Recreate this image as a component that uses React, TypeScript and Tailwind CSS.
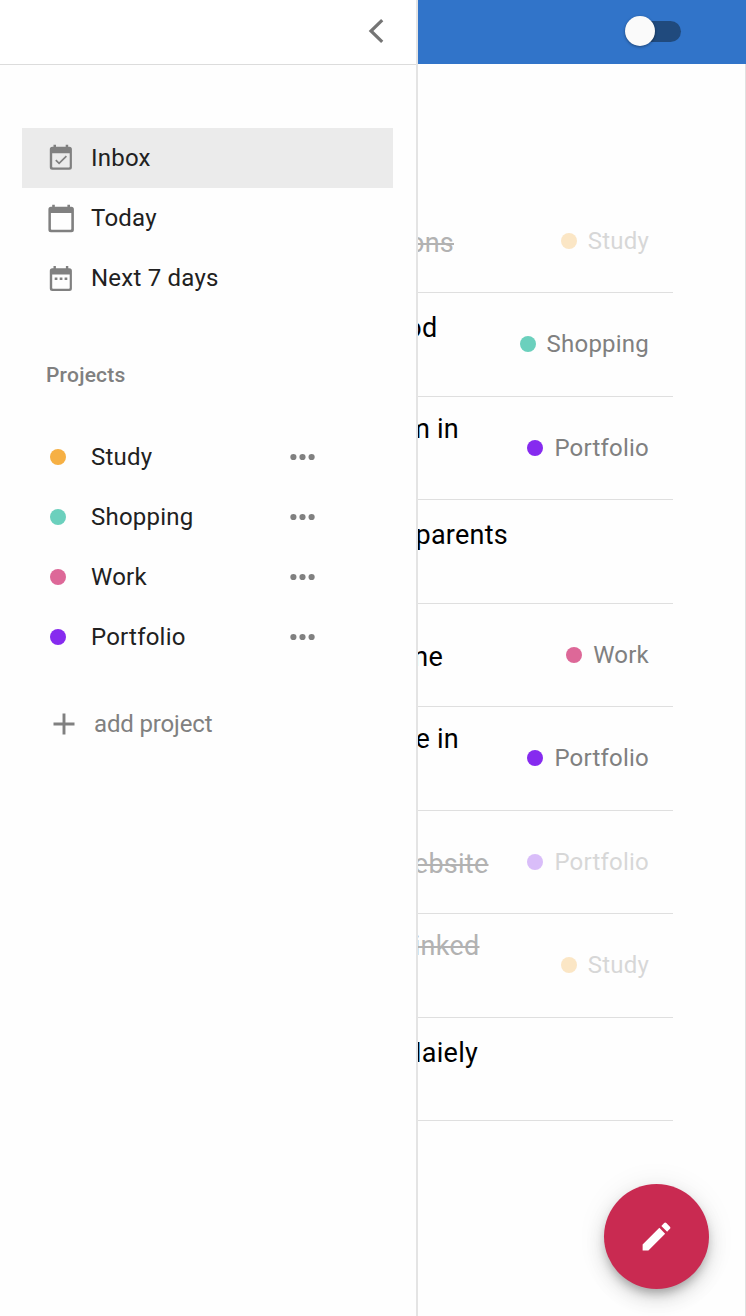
import React from "react";

type Task = {
  title: string;
  titleClass: string;
  project?: string;
  dot?: string;
  done?: boolean;
};

const tasks: Task[] = [
  { title: "ons", titleClass: "w-[36px] pt-[37px]", project: "Study", dot: "bg-[#f6b044]", done: true },
  { title: "od", titleClass: "w-[19.5px] pt-[18.5px]", project: "Shopping", dot: "bg-[#6bd0bd]" },
  { title: "m in", titleClass: "w-[41px] pt-[16px]", project: "Portfolio", dot: "bg-[#862bef]" },
  { title: "parents", titleClass: "w-[90px] pt-[18.5px]" },
  { title: "ne", titleClass: "w-[25px] pt-[37px]", project: "Work", dot: "bg-[#dd6898]" },
  { title: "e in", titleClass: "w-[41px] pt-[15.5px]", project: "Portfolio", dot: "bg-[#862bef]" },
  { title: "website", titleClass: "w-[70.5px] pt-[37px]", project: "Portfolio", dot: "bg-[#862bef]", done: true },
  { title: "linked", titleClass: "w-[61.5px] pt-[15.5px]", project: "Study", dot: "bg-[#f6b044]", done: true },
  { title: "Maiely", titleClass: "w-[60px] pt-[19.5px]" },
];

const projects = [
  { name: "Study", dot: "bg-[#f6b044]" },
  { name: "Shopping", dot: "bg-[#6bd0bd]" },
  { name: "Work", dot: "bg-[#dd6898]" },
  { name: "Portfolio", dot: "bg-[#862bef]" },
];

function InboxIcon() {
  return (
    <svg width="30" height="30" viewBox="0 0 30 30" fill="#808080">
      <path fillRule="evenodd" d="M7.5 1.7h2.5v2h9.7v-2h2.5v2h1.2a2.5 2.5 0 0 1 2.5 2.5v18.1a2.5 2.5 0 0 1-2.5 2.5H6.3a2.5 2.5 0 0 1-2.5-2.5V6.2a2.5 2.5 0 0 1 2.5-2.5h1.2zM6.2 10.3v13.5a.8.8 0 0 0 .8.8h15.9a.8.8 0 0 0 .8-.8V10.3z" />
      <path d="M9.8 17.1l3.3 3.3 7.3-7.2" fill="none" stroke="#808080" strokeWidth="1.7" />
    </svg>
  );
}

function TodayIcon() {
  return (
    <svg width="30" height="30" viewBox="0 0 30 30" fill="#808080">
      <path fillRule="evenodd" d="M6.2 1.7h2.6v2h12.6v-2H24v2h1.4a2.5 2.5 0 0 1 2.5 2.5v20.6a2.5 2.5 0 0 1-2.5 2.5H4.9a2.5 2.5 0 0 1-2.5-2.5V6.2a2.5 2.5 0 0 1 2.5-2.5h1.3zM4.9 10v16a.8.8 0 0 0 .8.8h18.8a.8.8 0 0 0 .8-.8V10z" />
    </svg>
  );
}

function WeekIcon() {
  return (
    <svg width="30" height="30" viewBox="0 0 30 30" fill="#808080">
      <path fillRule="evenodd" d="M7.5 3h2.4v2.2h10V3h2.4v2.2h1.1a2.5 2.5 0 0 1 2.5 2.5v17.8a2.5 2.5 0 0 1-2.5 2.5H6.3a2.5 2.5 0 0 1-2.5-2.5V7.7a2.5 2.5 0 0 1 2.5-2.5h1.2zM6.2 11.6v13.3a.8.8 0 0 0 .8.8h15.9a.8.8 0 0 0 .8-.8V11.6z" />
      <path d="M8.7 14.4h2.7v2.6H8.7zM13.7 14.4h2.7v2.6h-2.7zM18.6 14.4h2.7v2.6h-2.7z" />
    </svg>
  );
}

const views = [
  { name: "Inbox", icon: <InboxIcon />, active: true },
  { name: "Today", icon: <TodayIcon />, active: false },
  { name: "Next 7 days", icon: <WeekIcon />, active: false },
];

function Sidebar() {
  return (
    <aside className="flex w-[418px] shrink-0 flex-col border-r-2 border-[#e4e4e4] bg-[#fefefe] text-2xl tracking-[0.22px] text-[#212121]">
      <div className="flex h-[65px] shrink-0 items-center justify-end border-b border-[#dcdcdc] bg-white pr-[30.5px]">
        <svg width="20" height="28" viewBox="0 0 20 28" fill="none" stroke="#757575" strokeWidth="3.2" className="mb-[3px]">
          <path d="M16.2 3.2 5 14l11.2 10.9" />
        </svg>
      </div>
      <nav className="mt-[63px] ml-[22px] w-[370.5px]">
        {views.map((v) => (
          <div key={v.name} className={v.active ? "flex h-[60px] items-center bg-[#ebebeb] pl-6" : "flex h-[60px] items-center pl-6"}>
            {v.icon}
            <span className="ml-[15px]">{v.name}</span>
          </div>
        ))}
      </nav>
      <h2 className="mt-[54px] ml-[46px] text-[21px] leading-[26px] font-medium tracking-[0.22px] text-[#808080]">Projects</h2>
      <ul className="mt-[39px]">
        {projects.map((p) => (
          <li key={p.name} className="flex h-[60px] items-center pl-[50px]">
            <span className={`size-4 rounded-full ${p.dot}`} />
            <span className="ml-[25px] w-[199px]">{p.name}</span>
            <svg width="26" height="8" viewBox="0 0 26 8" fill="#808080">
              <circle cx="3.4" cy="4" r="3.1" />
              <circle cx="12.5" cy="4" r="3.1" />
              <circle cx="21.6" cy="4" r="3.1" />
            </svg>
          </li>
        ))}
      </ul>
      <button className="mt-[27px] flex h-[60px] items-center pl-[53px] text-[#808080]">
        <svg width="22" height="22" viewBox="0 0 22 22" stroke="#808080" strokeWidth="2.9">
          <path d="M11 .5v21M.5 11h21" />
        </svg>
        <span className="ml-[19px] tracking-[-0.15px]">add project</span>
      </button>
    </aside>
  );
}

function TaskRow({ task }: { task: Task }) {
  return (
    <li className="flex h-[103.5px] w-[255px] justify-between border-b border-[#dfdfdf]">
      <div className={`flex shrink-0 justify-end overflow-hidden text-[27px] leading-8 tracking-[0.25px] whitespace-nowrap ${task.titleClass}`}>
        <span className={task.done ? "text-[#b2b2b2] line-through decoration-2" : "text-black"}>{task.title}</span>
      </div>
      {task.project && (
        <div className={task.done ? "flex items-center pr-6 text-2xl tracking-[0.22px] text-[#808080] opacity-30" : "flex items-center pr-6 text-2xl tracking-[0.22px] text-[#808080]"}>
          <span className={`mr-[11px] size-4 rounded-full ${task.dot}`} />
          {task.project}
        </div>
      )}
    </li>
  );
}

export default function App() {
  return (
    <div className="relative flex h-[1316px] w-[746px] overflow-hidden bg-[#fefefe] font-[Roboto,sans-serif]">
      <Sidebar />
      <main className="flex min-w-0 flex-1 flex-col">
        <header className="flex h-16 shrink-0 items-center bg-[#3174c9] pb-0.5 pl-[207px]">
          <div className="flex h-[21px] w-[55.5px] items-center rounded-full bg-[#204a7d]">
            <span className="size-[30px] shrink-0 rounded-full bg-[#fafafa] shadow-[0_1px_3px_rgba(0,0,0,0.4)]" />
          </div>
        </header>
        <ul className="flex-1 border-r border-[#e0e0e0] pt-[125.5px]">
          {tasks.map((t, i) => (
            <TaskRow key={i} task={t} />
          ))}
        </ul>
      </main>
      <button className="absolute top-[1184px] left-[604px] flex size-[105px] items-center justify-center rounded-full bg-[#c92a51] shadow-[0_6px_10px_-2px_rgba(0,0,0,0.25),0_10px_20px_rgba(0,0,0,0.12),0_2px_30px_rgba(0,0,0,0.08)]">
        <svg width="37" height="37" viewBox="0 0 24 24" fill="#fff">
          <path d="M3 17.25V21h3.75L17.6 10.15l-3.75-3.75L3 17.25zM20.71 7.04c.39-.39.39-1.02 0-1.41l-2.34-2.34a.996.996 0 0 0-1.41 0l-1.83 1.83 3.75 3.75 1.83-1.83z" />
        </svg>
      </button>
    </div>
  );
}
